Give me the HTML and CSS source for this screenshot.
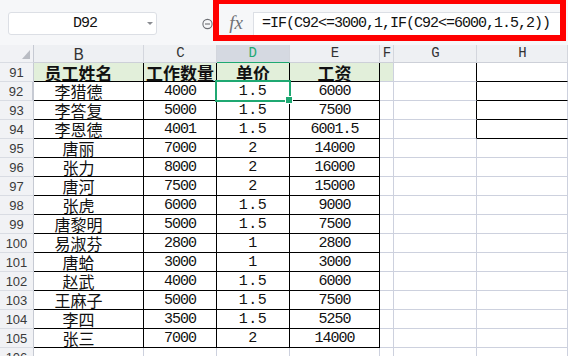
FILE: index.html
```html
<!DOCTYPE html>
<html lang="zh-CN">
<head>
  <meta charset="UTF-8">
  <title>工资表</title>
  <link rel="stylesheet" href="styles.css">
</head>
<body>
  <div class="toolbar">
    <div class="namebox">
      <span class="ref">D92</span>
      <span class="caret"></span>
    </div>
    <svg class="zoom-icon" width="11" height="12" viewBox="0 0 11 12">
      <circle cx="5.5" cy="6" r="4.6" fill="none" stroke="#6d6f74" stroke-width="1.1"/>
      <line x1="3" y1="6" x2="8" y2="6" stroke="#6d6f74" stroke-width="1.1"/>
    </svg>
    <div class="formula-frame">
      <span class="fx">fx</span>
      <div class="formula">=IF(C92&lt;=3000,1,IF(C92&lt;=6000,1.5,2))</div>
    </div>
  </div>

  <div class="sheet">
    <div class="row cols">
      <div class="corner">
        <svg width="8" height="9" viewBox="0 0 8 9"><polygon points="8,0 8,9 0,9" fill="#b9bcc3"/></svg>
      </div>
      <div>B</div><div>C</div><div class="col-active">D</div><div>E</div><div>F</div><div>G</div><div>H</div>
    </div>

    <div class="row data head hb"><div>91</div><div>员工姓名</div><div>工作数量</div><div>单价</div><div>工资</div><div class="green"></div><div></div><div></div></div>
    <div class="row data hb"><div class="row-active">92</div><div>李猎德</div><div>4000</div><div class="sel">1.5</div><div>6000</div><div></div><div></div><div></div></div>
    <div class="row data hb"><div>93</div><div>李答复</div><div>5000</div><div>1.5</div><div>7500</div><div></div><div></div><div></div></div>
    <div class="row data hb"><div>94</div><div>李恩德</div><div>4001</div><div>1.5</div><div>6001.5</div><div></div><div></div><div></div></div>
    <div class="row data"><div>95</div><div>唐丽</div><div>7000</div><div>2</div><div>14000</div><div></div><div></div><div></div></div>
    <div class="row data"><div>96</div><div>张力</div><div>8000</div><div>2</div><div>16000</div><div></div><div></div><div></div></div>
    <div class="row data"><div>97</div><div>唐河</div><div>7500</div><div>2</div><div>15000</div><div></div><div></div><div></div></div>
    <div class="row data"><div>98</div><div>张虎</div><div>6000</div><div>1.5</div><div>9000</div><div></div><div></div><div></div></div>
    <div class="row data"><div>99</div><div>唐黎明</div><div>5000</div><div>1.5</div><div>7500</div><div></div><div></div><div></div></div>
    <div class="row data"><div>100</div><div>易淑芬</div><div>2800</div><div>1</div><div>2800</div><div></div><div></div><div></div></div>
    <div class="row data"><div>101</div><div>唐蛤</div><div>3000</div><div>1</div><div>3000</div><div></div><div></div><div></div></div>
    <div class="row data"><div>102</div><div>赵武</div><div>4000</div><div>1.5</div><div>6000</div><div></div><div></div><div></div></div>
    <div class="row data"><div>103</div><div>王麻子</div><div>5000</div><div>1.5</div><div>7500</div><div></div><div></div><div></div></div>
    <div class="row data"><div>104</div><div>李四</div><div>3500</div><div>1.5</div><div>5250</div><div></div><div></div><div></div></div>
    <div class="row data"><div>105</div><div>张三</div><div>7000</div><div>2</div><div>14000</div><div></div><div></div><div></div></div>
    <div class="row"><div>106</div><div></div><div></div><div></div><div></div><div></div><div></div><div></div></div>
  </div>
</body>
</html>
```

FILE: styles.css
```css
* {
  box-sizing: border-box;
}

body {
  margin: 0;
  height: 356px;
  overflow: hidden;
  background: #ffffff;
  font-family: "Liberation Mono", "Noto Sans CJK SC", monospace;
}

/* top bar: name box + formula */
.toolbar {
  display: flex;
  align-items: flex-start;
  height: 45px;
  background: #f6f7f9;
}

.namebox {
  display: flex;
  align-items: center;
  width: 149px;
  height: 23px;
  margin: 12px 0 0 8px;
  background: #ffffff;
  border: 1px solid #dcdfe5;
  border-radius: 3px;
}

.ref {
  flex: 1;
  padding-left: 14px;
  text-align: center;
  font-size: 15px;
  line-height: 20px;
  letter-spacing: -1px;
  color: #111;
}

.caret {
  width: 0;
  height: 0;
  margin-right: 3px;
  border-left: 3px solid transparent;
  border-right: 3px solid transparent;
  border-top: 3px solid #8a8c91;
}

.zoom-icon {
  margin: 18px 0 0 45px;
}

.formula-frame {
  display: flex;
  align-items: flex-start;
  width: 353px;
  height: 43px;
  margin-top: -2px;
  padding-top: 8px;
  border: 6px solid #ff0000;
}

.fx {
  width: 34px;
  padding-top: 1px;
  text-align: center;
  font-family: "Liberation Serif", serif;
  font-style: italic;
  font-size: 19px;
  line-height: 20px;
  color: #6f7176;
}

.formula {
  flex: 1;
  height: 23px;
  padding-left: 8px;
  background: #ffffff;
  border-top: 1px solid #dcdfe5;
  border-left: 1px solid #dcdfe5;
  font-size: 15px;
  line-height: 21px;
  letter-spacing: -1px;
  color: #111;
  white-space: nowrap;
}

/* grid */
.row {
  display: grid;
  grid-template-columns: 34px 110px 73px 73px 90px 14px 83px 91px;
  height: 19px;
}

.row > div {
  display: flex;
  align-items: center;
  justify-content: center;
  overflow: hidden;
  white-space: nowrap;
  border-right: 1px solid #cdd1de;
  border-bottom: 1px solid #cdd1de;
  font-size: 15px;
  line-height: 17px;
  letter-spacing: -1px;
  color: #111;
}

.row > div:first-child {
  background: #f1f2f5;
  border-right-color: #c6cad3;
  border-bottom-color: #d9dce3;
  font-family: "Liberation Sans", sans-serif;
  font-size: 13px;
  letter-spacing: 0;
  color: #3a3a3a;
}

.row > div:nth-child(2) {
  padding-right: 20px;
  font-family: "Noto Sans CJK SC", sans-serif;
  font-size: 16px;
  letter-spacing: 0;
}

.row > div:nth-child(4) {
  letter-spacing: 0.5px;
}

.cols {
  height: 18px;
}

.cols > div {
  background: #eef0f3;
  border-right-color: #d3d6dd;
  border-bottom-color: #cdd0d8;
  font-size: 14px;
  color: #333;
}

.cols > .corner {
  justify-content: flex-end;
  align-items: flex-end;
  padding: 0 3px 3px 0;
}

.cols > .col-active {
  background: #d5d9e1;
  color: #1fa872;
  border-bottom: 1px solid #1fa872;
}

.data > div:nth-child(n+2):nth-child(-n+5) {
  border-right-color: #000;
  border-bottom-color: #000;
}

.hb > div:nth-child(7) {
  border-right-color: #000;
}

.hb > div:nth-child(8) {
  border-bottom-color: #000;
}

.head > div:nth-child(n+2):nth-child(-n+5) {
  background: #e2efda;
  font-family: "Noto Sans CJK SC", sans-serif;
  font-weight: bold;
  font-size: 17px;
  letter-spacing: 0;
}

.head > .green {
  background: #e2efda;
}

.row > .row-active {
  background: #e6e8ec;
  color: #1fa872;
  border-right: 2px solid #1fa872;
}

.row > .sel {
  position: relative;
  overflow: visible;
}

.sel::after {
  content: '';
  position: absolute;
  left: -2px;
  top: -2px;
  right: -2px;
  bottom: -2px;
  border: 2px solid #1fa872;
  z-index: 2;
}

.sel::before {
  content: '';
  position: absolute;
  right: -4px;
  bottom: -4px;
  width: 6px;
  height: 6px;
  background: #1fa872;
  border: 1px solid #ffffff;
  z-index: 3;
}
```
